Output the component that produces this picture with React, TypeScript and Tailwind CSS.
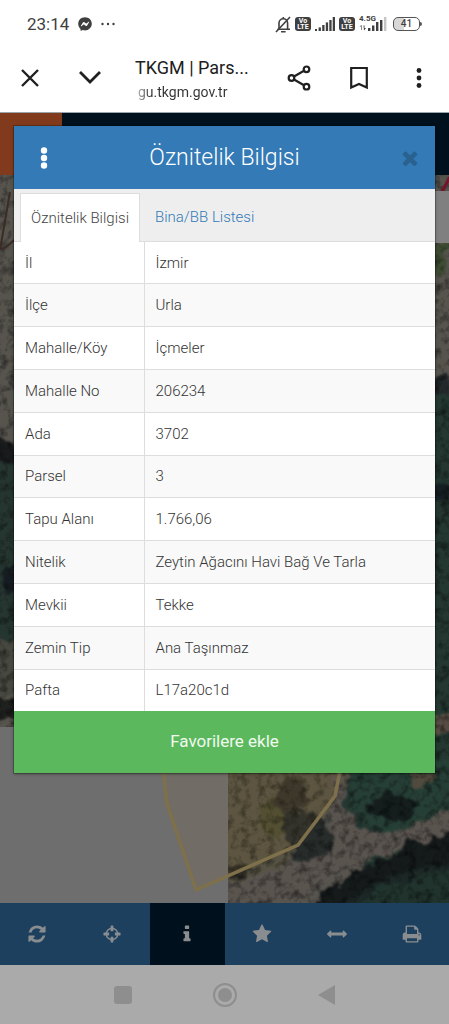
import React from "react";
import { FaFacebookMessenger } from "react-icons/fa";

const rows = [
  { label: "İl", value: "İzmir" },
  { label: "İlçe", value: "Urla" },
  { label: "Mahalle/Köy", value: "İçmeler" },
  { label: "Mahalle No", value: "206234" },
  { label: "Ada", value: "3702" },
  { label: "Parsel", value: "3" },
  { label: "Tapu Alanı", value: "1.766,06" },
  { label: "Nitelik", value: "Zeytin Ağacını Havi Bağ Ve Tarla" },
  { label: "Mevkii", value: "Tekke" },
  { label: "Zemin Tip", value: "Ana Taşınmaz" },
  { label: "Pafta", value: "L17a20c1d" },
];

const icons = {
  refresh:
    "M1639 1056q0 5-1 7-64 268-268 434.5t-478 166.5q-146 0-282.5-55t-243.5-157l-129 129q-19 19-45 19t-45-19-19-45v-448q0-26 19-45t45-19h448q26 0 45 19t19 45-19 45l-137 137q71 66 161 102t187 36q134 0 250-65t186-179q11-17 53-117 8-23 30-23h192q13 0 22.5 9.5t9.5 22.5zm25-800v448q0 26-19 45t-45 19h-448q-26 0-45-19t-19-45 19-45l138-138q-148-137-349-137-134 0-250 65t-186 179q-11 17-53 117-8 23-30 23h-199q-13 0-22.5-9.5t-9.5-22.5v-7q65-268 270-434.5t480-166.5q146 0 284 55.5t245 156.5l130-129q19-19 45-19t45 19 19 45z",
  crosshairs:
    "M1325 1024h-109q-26 0-45-19t-19-45v-128q0-26 19-45t45-19h109q-32-108-112.5-188.5t-188.5-112.5v109q0 26-19 45t-45 19h-128q-26 0-45-19t-19-45v-109q-108 32-188.5 112.5t-112.5 188.5h109q26 0 45 19t19 45v128q0 26-19 45t-45 19h-109q32 108 112.5 188.5t188.5 112.5v-109q0-26 19-45t45-19h128q26 0 45 19t19 45v109q108-32 188.5-112.5t112.5-188.5zm339-192v128q0 26-19 45t-45 19h-143q-37 161-154.5 278.5t-278.5 154.5v143q0 26-19 45t-45 19h-128q-26 0-45-19t-19-45v-143q-161-37-278.5-154.5t-154.5-278.5h-143q-26 0-45-19t-19-45v-128q0-26 19-45t45-19h143q37-161 154.5-278.5t278.5-154.5v-143q0-26 19-45t45-19h128q26 0 45 19t19 45v143q161 37 278.5 154.5t154.5 278.5h143q26 0 45 19t19 45z",
  info: "M1216 1344v128q0 26-19 45t-45 19h-512q-26 0-45-19t-19-45v-128q0-26 19-45t45-19h64v-384h-64q-26 0-45-19t-19-45v-128q0-26 19-45t45-19h384q26 0 45 19t19 45v576h64q26 0 45 19t19 45zm-128-1152v192q0 26-19 45t-45 19h-256q-26 0-45-19t-19-45v-192q0-26 19-45t45-19h256q26 0 45 19t19 45z",
  star: "M1728 647q0 22-26 48l-363 354 86 500q1 7 1 20 0 21-10.5 35.5t-30.5 14.5q-19 0-40-12l-449-236-449 236q-22 12-40 12-21 0-31.5-14.5t-10.5-35.5q0-6 2-20l86-500-364-354q-25-27-25-48 0-37 56-46l502-73 225-455q19-41 49-41t49 41l225 455 502 73q56 9 56 46z",
  arrows:
    "M1792 896q0 26-19 45l-256 256q-19 19-45 19t-45-19-19-45v-128h-1024v128q0 26-19 45t-45 19-45-19l-256-256q-19-19-19-45t19-45l256-256q19-19 45-19t45 19 19 45v128h1024v-128q0-26 19-45t45-19 45 19l256 256q19 19 19 45z",
  print:
    "M448 1536h896v-256h-896v256zm0-640h896v-384h-160q-40 0-68-28t-28-68v-160h-640v640zm1152 64q0-26-19-45t-45-19-45 19-19 45 19 45 45 19 45-19 19-45zm128 0v416q0 13-9.5 22.5t-22.5 9.5h-224v160q0 40-28 68t-68 28h-960q-40 0-68-28t-28-68v-160h-224q-13 0-22.5-9.5t-9.5-22.5v-416q0-79 56.5-135.5t135.5-56.5h64v-544q0-40 28-68t68-28h672q40 0 88 20t76 48l152 152q28 28 48 76t20 88v256h64q79 0 135.5 56.5t56.5 135.5z",
  times:
    "M1490 1322q0 40-28 68l-136 136q-28 28-68 28t-68-28l-294-294-294 294q-28 28-68 28t-68-28l-136-136q-28-28-28-68t28-68l294-294-294-294q-28-28-28-68t28-68l136-136q28-28 68-28t68 28l294 294 294-294q28-28 68-28t68 28l136 136q28 28 28 68t-28 68l-294 294 294 294q28 28 28 68z",
};

interface IconProps {
  path: string;
  className?: string;
}

const Icon: React.FC<IconProps> = ({ path, className }) => (
  <svg viewBox="0 0 1792 1792" fill="currentColor" className={className} aria-hidden="true">
    <path d={path} />
  </svg>
);

const tools = [
  { name: "Yenile", path: icons.refresh },
  { name: "Konumum", path: icons.crosshairs },
  { name: "Bilgi", path: icons.info, active: true },
  { name: "Favoriler", path: icons.star },
  { name: "Ölçüm", path: icons.arrows },
  { name: "Yazdır", path: icons.print },
];

const VolteBadge: React.FC = () => (
  <span className="flex h-[14px] w-4 flex-col items-center justify-center rounded-[3px] bg-[#3f3f3f] text-[7px] leading-[6px] font-bold text-white">
    <span>Vo</span>
    <span>LTE</span>
  </span>
);

const StatusBar: React.FC = () => (
  <div className="flex h-12 items-center justify-between pr-[27px] pl-[27px] text-[#3f3f3f]">
    <div className="flex items-center gap-[9px]">
      <span className="text-[17px] leading-6">23:14</span>
      <FaFacebookMessenger className="h-[14px] w-[14px]" />
      <svg viewBox="0 0 14 4" className="h-1 w-[14px]" fill="currentColor" aria-hidden="true">
        <circle cx="1.5" cy="2" r="1.2" />
        <circle cx="7" cy="2" r="1.2" />
        <circle cx="12.5" cy="2" r="1.2" />
      </svg>
    </div>

    <div className="flex items-center gap-1">
      {/* Muted bell */}
      <svg
        viewBox="0 0 16 17"
        className="h-[17px] w-4"
        fill="none"
        stroke="currentColor"
        strokeWidth="1.6"
        aria-hidden="true"
      >
        <path d="M2.5 13.2h12.5M4 13V7a4.3 4.3 0 0 1 8.6 0v6M8.3 1v1.5" />
        <path d="M6 15.8h4.6M15 1 1 16" />
      </svg>
      <VolteBadge />
      <svg viewBox="0 0 20 14" className="h-[14px] w-5" fill="currentColor" aria-hidden="true">
        <rect x="0" y="12" width="2" height="2" />
        <rect x="3.6" y="10.4" width="2.3" height="3.6" />
        <rect x="7.2" y="8" width="2.3" height="6" />
        <rect x="10.8" y="5.4" width="2.3" height="8.6" />
        <rect x="14.3" y="3" width="2.3" height="11" />
        <rect x="17.7" y="0" width="2.3" height="14" />
      </svg>
      <VolteBadge />
      <div className="relative h-4 w-[28px]">
        <svg viewBox="0 0 28 16" className="h-4 w-[28px]" fill="currentColor" aria-hidden="true">
          <path d="M2 14v-3.5h-1.5L2.6 9v5zM4.5 9.5h1V12h1.5L5 14.5z" />
          <rect x="9" y="12" width="2.4" height="3" />
          <rect x="13" y="9.5" width="2.4" height="5.5" />
          <rect x="17" y="6" width="2.4" height="9" />
          <rect x="21" y="4" width="2.4" height="11" />
          <rect x="25" y="1" width="2.4" height="14" opacity="0.3" />
        </svg>
        <span className="absolute -top-px left-0 text-[8px] leading-[8px] font-bold">4.5G</span>
      </div>
      <div className="flex items-center pl-[2px]">
        <span className="h-[14px] w-[27px] rounded-[5px] border border-[#555] bg-[linear-gradient(to_right,#d8d8d8_41%,white_41%)] text-center text-[10px] leading-[12px] font-medium">
          41
        </span>
        <span className="h-1 w-[2px] rounded-r-sm bg-[#555]" />
      </div>
    </div>
  </div>
);

const BrowserBar: React.FC = () => (
  <div className="flex h-16 items-center pb-[5px] text-[#202020]">
    <button type="button" aria-label="Kapat" className="flex w-[60px] justify-center">
      <svg viewBox="0 0 18 18" className="h-[18px] w-[18px]" stroke="currentColor" strokeWidth="2.4">
        <path d="M1 1l16 16M17 1 1 17" />
      </svg>
    </button>
    <button type="button" aria-label="Küçült" className="flex w-[60px] justify-center">
      <svg viewBox="0 0 22 13" className="h-[13px] w-[22px]" fill="none" stroke="currentColor" strokeWidth="2.8">
        <path d="M1 1l10 10L21 1" />
      </svg>
    </button>
    <div className="min-w-0 flex-1 pt-[5px] pl-[15px]">
      <p className="truncate text-lg leading-6">TKGM | Pars...</p>
      <p className="bg-[linear-gradient(to_right,#ccc,#333_16px)] bg-clip-text pl-[3px] text-sm leading-6 text-transparent">
        gu.tkgm.gov.tr
      </p>
    </div>
    <button type="button" aria-label="Paylaş" className="flex w-[60px] justify-center">
      <svg
        viewBox="0 0 24 26"
        className="h-[26px] w-6"
        fill="none"
        stroke="currentColor"
        strokeWidth="2.2"
      >
        <circle cx="19.5" cy="4.3" r="2.8" />
        <circle cx="4.5" cy="13" r="2.8" />
        <circle cx="19.5" cy="21.7" r="2.8" />
        <path d="M7 11.5l10-5.7M7 14.5l10 5.7" />
      </svg>
    </button>
    <button type="button" aria-label="Yer işareti" className="flex w-[60px] justify-center">
      <svg
        viewBox="0 0 18 24"
        className="h-6 w-[18px]"
        fill="none"
        stroke="currentColor"
        strokeWidth="2.2"
      >
        <path d="M1.2 2h15.6v19.5L9 18 1.2 21.5z" />
      </svg>
    </button>
    <button type="button" aria-label="Menü" className="flex w-[60px] justify-center">
      <svg viewBox="0 0 6 20" className="h-5 w-[6px]" fill="currentColor">
        <circle cx="3" cy="2.5" r="2.4" />
        <circle cx="3" cy="10" r="2.4" />
        <circle cx="3" cy="17.5" r="2.4" />
      </svg>
    </button>
  </div>
);

/* Aerial map, already dimmed by the modal backdrop */
const MapView: React.FC = () => (
  <svg
    viewBox="0 175 449 728"
    preserveAspectRatio="xMidYMax slice"
    className="absolute inset-0 h-full w-full"
    aria-hidden="true"
  >
    <defs>
      <filter id="rough" x="-5%" y="-5%" width="110%" height="110%" colorInterpolationFilters="sRGB">
        <feTurbulence type="fractalNoise" baseFrequency="0.08" numOctaves="3" seed="4" result="n" />
        <feDisplacementMap
          in="SourceGraphic"
          in2="n"
          scale="16"
          xChannelSelector="R"
          yChannelSelector="G"
        />
        <feGaussianBlur stdDeviation="1" />
      </filter>
      <filter id="grain" x="0" y="0" width="100%" height="100%" colorInterpolationFilters="sRGB">
        <feTurbulence type="fractalNoise" baseFrequency="0.12" numOctaves="4" seed="9" />
        <feColorMatrix values="0 0 0 0 0  0 0 0 0 0  0 0 0 0 0  1.1 0 0 0 -0.48" />
      </filter>
      <clipPath id="photo">
        <path d="M0 175h449v16h-40v52h40v660H228V727H0z" />
      </clipPath>
    </defs>
    <rect x="0" y="175" width="449" height="728" fill="#6e6e6e" />
    <g clipPath="url(#photo)">
      <g filter="url(#rough)">
        <rect x="-20" y="160" width="490" height="760" fill="#57544e" />
        {/* Left edge */}
        <path d="M-20 433L8 440l20 20v200H-20z" fill="#25352f" />
        <path d="M-20 432L8 438l14 22-10 6-32-16z" fill="#191c1d" />
        <path d="M2 570l18-2v24H8z" fill="#161d22" />
        <path d="M-20 640h48v55H-20z" fill="#47483f" />
        <path d="M-20 694l40 6v20H-20z" fill="#1f211f" />
        {/* Right edge */}
        <path d="M430 385h40v480H320l20-92h90z" fill="#243731" />
        <path d="M425 243h24l-8 34h-16z" fill="#3d4b32" />
        <path d="M425 377h24v18h-24z" fill="#23282a" />
        <path d="M425 484h24v18h-24z" fill="#151e22" />
        <path d="M425 714h34v18h-34z" fill="#574c43" />
        {/* Field below the dialog */}
        <path d="M220 765h135l-18 35-45 60-72 35z" fill="#575344" />
        <path d="M262 800l20-6 6 34-14 12-14-14z" fill="#4b4c33" />
        <path d="M350 760h110v52l-75 23-34-22z" fill="#263f36" />
        <path d="M408 773l30 0-8 12-20 2z" fill="#514a3e" />
        <path
          d="M345 760c-8 20 0 48 10 60 10 12 24 18 50 8l60-26v30l-70 20-60 22-60 40H210v-20l60-24 40-10 20-34 4-66z"
          fill="#5a544f"
        />
        <path d="M283 776l18 2 8 28-22 10-14-14z" fill="#34322b" />
        <path d="M284 812l30 0 18 20-4 24-28 6-16-24z" fill="#282d2c" />
        <path d="M368 804l20-14 22 10 8 8-14 14-28-2z" fill="#151d1d" />
        <path d="M228 865h18v14h-18z" fill="#2b2a23" />
        {/* Trees along the road */}
        <path d="M304 914l30-18 30-20 36-14 70-24v76z" fill="#1c2827" />
        <path d="M308 908l24-20 30-20 40-16 6-12 18 2 36-16v34l-62 14-40 14-24 24z" fill="#151a1b" />
        <path d="M360 910l20-26 70-16 20 46z" fill="#20332c" />
      </g>
      <rect x="0" y="175" width="449" height="728" filter="url(#grain)" />
      <path d="M10 192L0 250M14 240Q4 250 0 249" fill="none" stroke="#3b2c24" strokeWidth="2" />
      <path d="M440 195l10-18" stroke="#77132a" strokeWidth="3" />
    </g>
    <path d="M409 191h40v52h-40z" fill="#808080" />
    <path
      d="M162 760l5 44 29 86 102-45 37-49 10-50z"
      fill="#8a6e2f"
      fillOpacity="0.12"
      stroke="#7e704a"
      strokeWidth="3.5"
    />
  </svg>
);

const ParcelDialog: React.FC = () => (
  <div
    role="dialog"
    aria-labelledby="dialog-title"
    className="absolute inset-x-[14px] top-[13px] bg-white shadow-[0_0_0_1px_rgba(0,0,0,0.2),0_1px_3px_rgba(0,0,0,0.4)]"
  >
    {/* Title */}
    <div className="flex h-[63px] items-center bg-[#337ab7] px-[5px] text-white">
      <button type="button" aria-label="Seçenekler" className="flex w-[50px] justify-center">
        <svg viewBox="0 0 8 22" className="h-[22px] w-2" fill="currentColor">
          <circle cx="4" cy="3.5" r="3.2" />
          <circle cx="4" cy="11" r="3.2" />
          <circle cx="4" cy="18.5" r="3.2" />
        </svg>
      </button>
      <h1 id="dialog-title" className="flex-1 pr-[10px] text-center text-[23px] leading-8 font-light">
        Öznitelik Bilgisi
      </h1>
      <button type="button" aria-label="Kapat" className="flex w-10 justify-center text-[#29628f]">
        <Icon path={icons.times} className="h-[22px] w-[22px]" />
      </button>
    </div>

    {/* Tabs */}
    <div
      role="tablist"
      className="flex h-[53px] items-stretch border-b border-[#ddd] bg-[#eee] pt-1 pl-[6px] text-[15px] font-light"
    >
      <button
        type="button"
        role="tab"
        aria-selected="true"
        className="-mb-px border border-b-0 border-[#ddd] bg-white px-[10px] text-[#444]"
      >
        Öznitelik Bilgisi
      </button>
      <button type="button" role="tab" aria-selected="false" className="px-[15px] text-[#337ab7]">
        Bina/BB Listesi
      </button>
    </div>

    {/* Attributes */}
    <table className="h-[469px] w-full border-collapse text-left text-[15px] leading-5 text-[#333]">
      <tbody>
        {rows.map((row) => (
          <tr key={row.label} className="border-b border-[#ddd] last:border-b-0 even:bg-[#f9f9f9]">
            <th scope="row" className="w-[130px] border-r border-[#ddd] pl-[11px] font-light">
              {row.label}
            </th>
            <td className="pl-[11px] font-light">{row.value}</td>
          </tr>
        ))}
      </tbody>
    </table>

    <button type="button" className="h-[62px] w-full bg-[#5cb85c] text-[17px] text-[#f0faf0]">
      Favorilere ekle
    </button>
  </div>
);

const App: React.FC = () => {
  return (
    <div className="flex min-h-screen flex-col bg-white font-[Roboto,sans-serif]">
      <header className="border-b border-[#9aa5ab]">
        <StatusBar />
        <BrowserBar />
      </header>

      <main className="relative flex min-h-[700px] flex-1 flex-col">
        <div className="flex h-[62px] bg-[#00101d]">
          <div className="w-[62px] bg-[#813b1c]" />
        </div>
        <div className="relative flex-1 overflow-hidden">
          <MapView />
        </div>
        <ParcelDialog />
      </main>

      <nav className="grid h-[62px] grid-cols-6 bg-[#1c405e]">
        {tools.map((tool) => (
          <button
            key={tool.name}
            type="button"
            aria-label={tool.name}
            className={
              tool.active
                ? "flex items-center justify-center bg-[#00101d] text-[#8a8d90]"
                : "flex items-center justify-center text-[#8a8d90]"
            }
          >
            <Icon path={tool.path} className="h-5 w-5" />
          </button>
        ))}
      </nav>

      {/* System navigation */}
      <footer className="flex h-[59px] items-center justify-center gap-[78px] bg-[#aaaaaa] text-[#8e8e8e]">
        <button type="button" aria-label="Son uygulamalar" className="flex w-6 justify-center">
          <span className="h-[18px] w-[18px] rounded-[3px] bg-[#8e8e8e]" />
        </button>
        <button
          type="button"
          aria-label="Ana ekran"
          className="flex h-6 w-6 items-center justify-center rounded-full border-2 border-[#8e8e8e]"
        >
          <span className="h-[14px] w-[14px] rounded-full bg-[#8e8e8e]" />
        </button>
        <button type="button" aria-label="Geri" className="flex w-6 justify-center">
          <svg viewBox="0 0 17 20" className="h-5 w-[17px]" fill="currentColor">
            <path d="M17 0v20L0 10z" />
          </svg>
        </button>
      </footer>
    </div>
  );
};

export default App;
